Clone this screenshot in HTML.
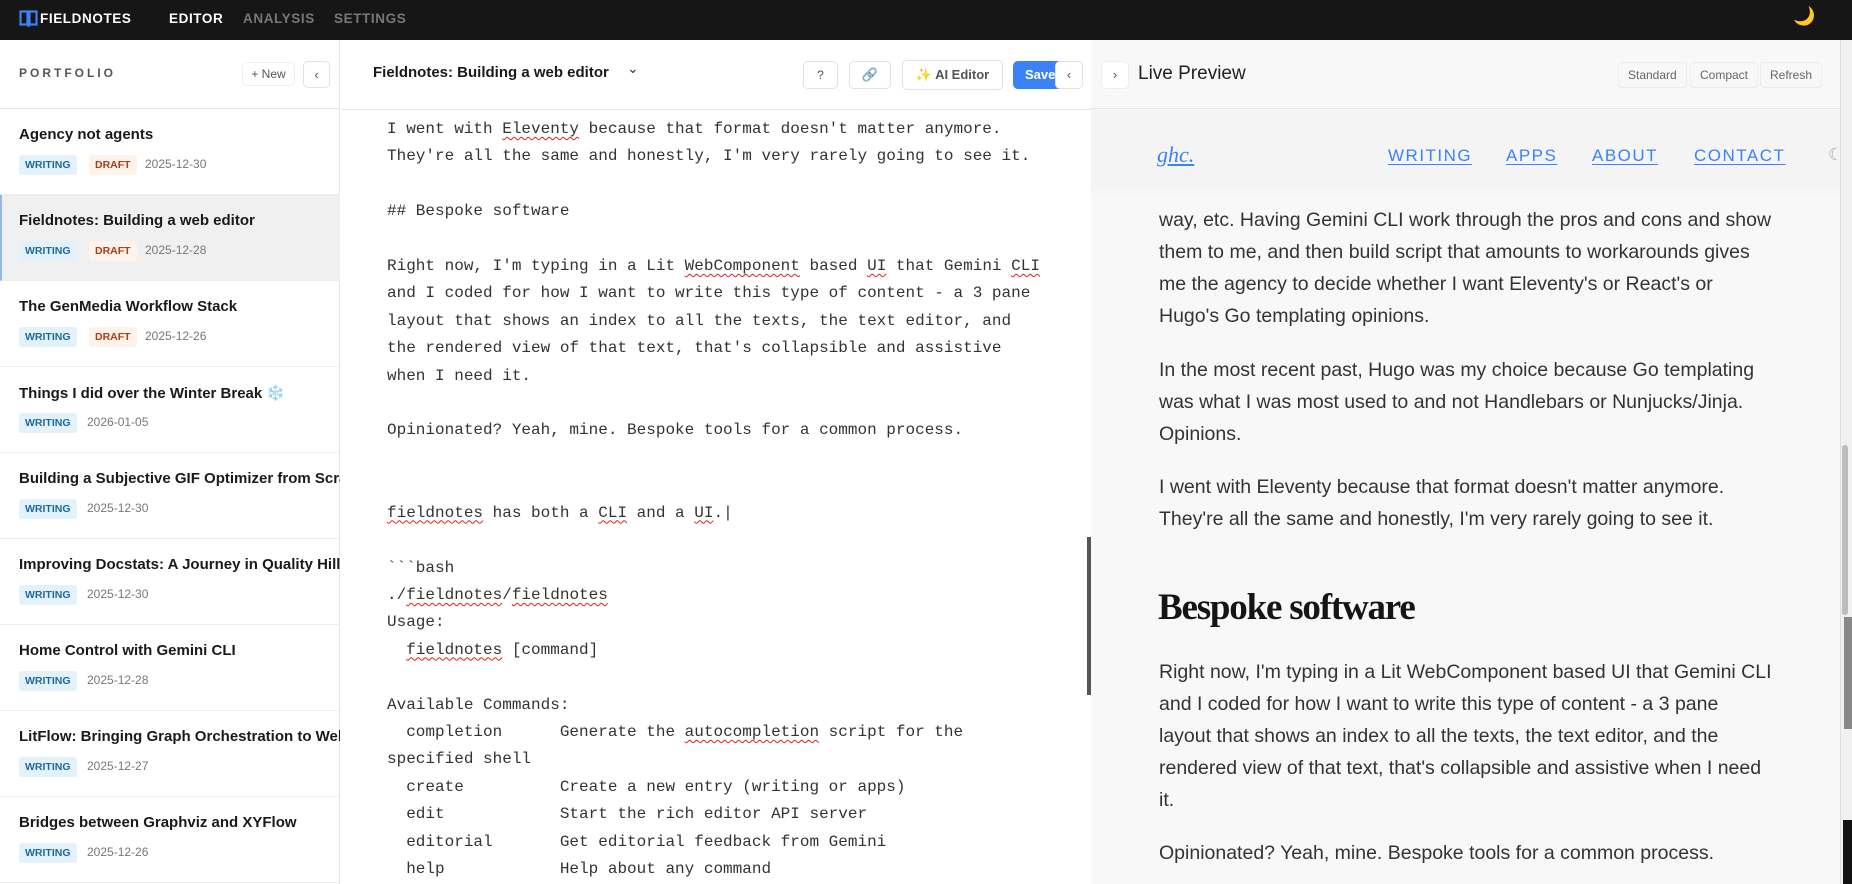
<!DOCTYPE html>
<html><head><meta charset="utf-8"><style>
*{box-sizing:border-box;margin:0;padding:0}
body{width:1852px;height:884px;overflow:hidden;background:#fff;font-family:"Liberation Sans",sans-serif;position:relative}
.abs{position:absolute}
.top{left:0;top:0;width:1852px;height:40px;background:#161616}
.top span{position:absolute;top:11px;font-weight:bold;font-size:13.5px;letter-spacing:.6px}
.side{left:0;top:40px;width:340px;height:844px;background:#fff;border-right:1px solid #e6e6e6}
.item{position:absolute;left:0;width:340px;height:86px;border-bottom:1px solid #ececec;overflow:hidden}
.item .t{position:absolute;left:19px;top:17px;font-size:15px;font-weight:bold;color:#1a1a1a;white-space:nowrap}
.tag{position:absolute;top:46px;height:20px;font-size:10.5px;font-weight:bold;line-height:20px;padding:0 6px;border-radius:3px}
.w{left:19px;background:#e3f1fb;color:#1d6aa0}
.d{left:89px;background:#fdf3ea;color:#a5401a}
.dt{position:absolute;top:48px;font-size:12px;color:#777}
.ed{left:341px;top:40px;width:750px;height:844px;background:#fff}
.mono{position:absolute;left:387px;font-family:"Liberation Mono",monospace;font-size:16px;color:#333;white-space:pre;line-height:27.4px}
.sq{text-decoration:underline wavy #e02020;text-decoration-thickness:1px;text-underline-offset:3px}
.pv{left:1091px;top:40px;width:761px;height:844px;background:#f8f8f8}
.p{position:absolute;left:1159px;font-size:19.5px;color:#333;line-height:32px;white-space:pre}
.btn{position:absolute;border:1px solid #e2e2e2;border-radius:5px;background:#fff;font-size:13px;color:#555;text-align:center}
.sb{position:absolute;border:1px solid #ececec;border-radius:4px;font-size:12px;color:#666;height:26px;line-height:24px;padding:0 9px;top:22px}
.nav{position:absolute;top:146px;font-size:17px;letter-spacing:1.5px;color:#3b82f6;text-decoration:underline;text-underline-offset:3px}
</style></head><body>
<div class="abs top">
<svg class="abs" style="left:19px;top:9px" width="19" height="19" viewBox="0 0 19 19"><path d="M1.5 2.5h7v13h-7zM10.5 2.5h7v13h-7z" fill="none" stroke="#3b82f6" stroke-width="2.2"/><path d="M9.5 15v3" stroke="#3b82f6" stroke-width="2"/></svg>
<span style="left:40px;color:#fff">FIELDNOTES</span>
<span style="left:169px;color:#fff">EDITOR</span>
<span style="left:243px;color:#777">ANALYSIS</span>
<span style="left:334px;color:#777">SETTINGS</span>
<span style="left:1793px;top:6px;font-size:18px">🌙</span>
</div>

<div class="abs side">
<div class="abs" style="left:19px;top:26px;font-size:12px;font-weight:bold;letter-spacing:3px;color:#555">PORTFOLIO</div>
<div class="btn" style="left:242px;top:22px;width:53px;height:24px;line-height:22px;font-size:12px;border-color:#eee">+ New</div>
<div class="btn" style="left:303px;top:21px;width:27px;height:27px;line-height:25px">‹</div>
<div class="abs" style="left:0;top:68px;width:340px;border-top:1px solid #e6e6e6"></div>
<div class="item" style="top:69px"><div class="t">Agency not agents</div><div class="tag w">WRITING</div><div class="tag d">DRAFT</div><div class="dt" style="left:145px">2025-12-30</div></div>
<div class="item" style="top:155px;background:#f0f0f0;border-left:2px solid #93b8ee"><div class="t" style="left:17px">Fieldnotes: Building a web editor</div><div class="tag w" style="left:17px">WRITING</div><div class="tag d" style="left:87px">DRAFT</div><div class="dt" style="left:143px">2025-12-28</div></div>
<div class="item" style="top:241px"><div class="t">The GenMedia Workflow Stack</div><div class="tag w">WRITING</div><div class="tag d">DRAFT</div><div class="dt" style="left:145px">2025-12-26</div></div>
<div class="item" style="top:327px"><div class="t">Things I did over the Winter Break ❄️</div><div class="tag w">WRITING</div><div class="dt" style="left:87px">2026-01-05</div></div>
<div class="item" style="top:413px"><div class="t">Building a Subjective GIF Optimizer from Scratch</div><div class="tag w">WRITING</div><div class="dt" style="left:87px">2025-12-30</div></div>
<div class="item" style="top:499px"><div class="t">Improving Docstats: A Journey in Quality Hill</div><div class="tag w">WRITING</div><div class="dt" style="left:87px">2025-12-30</div></div>
<div class="item" style="top:585px"><div class="t">Home Control with Gemini CLI</div><div class="tag w">WRITING</div><div class="dt" style="left:87px">2025-12-28</div></div>
<div class="item" style="top:671px"><div class="t">LitFlow: Bringing Graph Orchestration to Web</div><div class="tag w">WRITING</div><div class="dt" style="left:87px">2025-12-27</div></div>
<div class="item" style="top:757px"><div class="t">Bridges between Graphviz and XYFlow</div><div class="tag w">WRITING</div><div class="dt" style="left:87px">2025-12-26</div></div>
</div>

<div class="abs ed">
<div class="abs" style="left:32px;top:24px;font-size:15px;font-weight:bold;color:#1a1a1a">Fieldnotes: Building a web editor</div>
<div class="abs" style="left:286px;top:20px;font-size:14px;color:#333">⌄</div>
<div class="abs" style="left:0;top:69px;width:750px;border-top:1px solid #e6e6e6"></div>
</div>
<div class="btn" style="left:803px;top:61px;width:35px;height:28px;line-height:26px;font-size:12px">?</div>
<div class="btn" style="left:849px;top:61px;width:42px;height:28px;line-height:26px;font-size:13px;color:#8aa">🔗</div>
<div class="btn" style="left:902px;top:60px;width:101px;height:30px;line-height:28px;font-weight:bold;color:#555">✨ AI Editor</div>
<div class="abs" style="left:1013px;top:61px;width:50px;height:28px;background:#3b82f6;border-radius:5px 0 0 5px;color:#fff;font-weight:bold;font-size:13px;line-height:28px;padding-left:12px">Save</div>
<div class="btn" style="left:1055px;top:61px;width:28px;height:28px;line-height:26px">‹</div>

<div class="mono" style="top:116px">I went with <span class="sq">Eleventy</span> because that format doesn't matter anymore.
They're all the same and honestly, I'm very rarely going to see it.

## Bespoke software

Right now, I'm typing in a Lit <span class="sq">WebComponent</span> based <span class="sq">UI</span> that Gemini <span class="sq">CLI</span>
and I coded for how I want to write this type of content - a 3 pane
layout that shows an index to all the texts, the text editor, and
the rendered view of that text, that's collapsible and assistive
when I need it.

Opinionated? Yeah, mine. Bespoke tools for a common process.


<span class="sq">fieldnotes</span> has both a <span class="sq">CLI</span> and a <span class="sq">UI</span>.|

&#96;&#96;&#96;bash
./<span class="sq">fieldnotes</span>/<span class="sq">fieldnotes</span>
Usage:
  <span class="sq">fieldnotes</span> [command]

Available Commands:
  completion      Generate the <span class="sq">autocompletion</span> script for the
specified shell
  create          Create a new entry (writing or apps)
  edit            Start the rich editor API server
  editorial       Get editorial feedback from Gemini
  help            Help about any command</div>
<div class="abs" style="left:1087px;top:537px;width:4px;height:158px;background:#555"></div>

<div class="abs pv">
<div class="abs" style="left:0;top:0;width:761px;height:69px;background:#f8f8f8;border-bottom:1px solid #e4e4e4"></div>
<div class="btn" style="left:10px;top:21px;width:28px;height:28px;line-height:26px;border-color:#eee">›</div>
<div class="abs" style="left:47px;top:23px;font-size:19px;color:#222">Live Preview</div>
<div class="sb" style="left:527px">Standard</div>
<div class="sb" style="left:599px">Compact</div>
<div class="sb" style="left:669px">Refresh</div>
<div class="abs" style="left:0;top:70px;width:761px;height:92px;background:linear-gradient(#f4f4f4,#f4f4f4 80%,#f8f8f8)"></div>
</div>
<div class="abs" style="left:1157px;top:142px;font-family:'Liberation Serif',serif;font-style:italic;font-size:22px;color:#3b82f6;text-decoration:underline">ghc.</div>
<div class="nav" style="left:1388px">WRITING</div>
<div class="nav" style="left:1506px">APPS</div>
<div class="nav" style="left:1592px">ABOUT</div>
<div class="nav" style="left:1694px">CONTACT</div>
<div class="abs" style="left:1828px;top:145px;color:#aaa;font-size:17px">☾</div>

<div class="p" style="top:204px">way, etc. Having Gemini CLI work through the pros and cons and show
them to me, and then build script that amounts to workarounds gives
me the agency to decide whether I want Eleventy's or React's or
Hugo's Go templating opinions.</div>
<div class="p" style="top:354px">In the most recent past, Hugo was my choice because Go templating
was what I was most used to and not Handlebars or Nunjucks/Jinja.
Opinions.</div>
<div class="p" style="top:471px">I went with Eleventy because that format doesn't matter anymore.
They're all the same and honestly, I'm very rarely going to see it.</div>
<div class="abs" style="left:1158px;top:586px;font-family:'Liberation Serif',serif;font-weight:bold;font-size:37px;color:#151515;letter-spacing:-1.2px">Bespoke software</div>
<div class="p" style="top:656px">Right now, I'm typing in a Lit WebComponent based UI that Gemini CLI
and I coded for how I want to write this type of content - a 3 pane
layout that shows an index to all the texts, the text editor, and the
rendered view of that text, that's collapsible and assistive when I need
it.</div>
<div class="p" style="top:837px">Opinionated? Yeah, mine. Bespoke tools for a common process.</div>

<div class="abs" style="left:1840px;top:40px;width:12px;height:844px;background:#f0f0f0;border-left:1px solid #ddd"></div>
<div class="abs" style="left:1842px;top:445px;width:6px;height:170px;background:#bbb;border-radius:3px"></div>
<div class="abs" style="left:1844px;top:617px;width:8px;height:112px;background:#888"></div>
<div class="abs" style="left:1843px;top:820px;width:9px;height:64px;background:#111"></div>
</body></html>
